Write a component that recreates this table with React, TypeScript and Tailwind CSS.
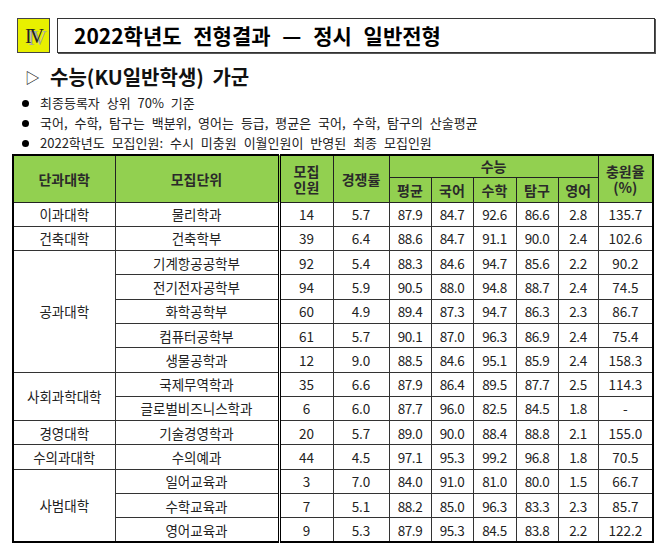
const rows = [
  { college: "이과대학", span: 1, unit: "물리학과", n: "14", r: "5.7", s: ["87.9", "84.7", "92.6", "86.6", "2.8"], fill: "135.7" },
  { college: "건축대학", span: 1, unit: "건축학부", n: "39", r: "6.4", s: ["88.6", "84.7", "91.1", "90.0", "2.4"], fill: "102.6" },
  { college: "공과대학", span: 5, unit: "기계항공공학부", n: "92", r: "5.4", s: ["88.3", "84.6", "94.7", "85.6", "2.2"], fill: "90.2" },
  { college: "", span: 0, unit: "전기전자공학부", n: "94", r: "5.9", s: ["90.5", "88.0", "94.8", "88.7", "2.4"], fill: "74.5" },
  { college: "", span: 0, unit: "화학공학부", n: "60", r: "4.9", s: ["89.4", "87.3", "94.7", "86.3", "2.3"], fill: "86.7" },
  { college: "", span: 0, unit: "컴퓨터공학부", n: "61", r: "5.7", s: ["90.1", "87.0", "96.3", "86.9", "2.4"], fill: "75.4" },
  { college: "", span: 0, unit: "생물공학과", n: "12", r: "9.0", s: ["88.5", "84.6", "95.1", "85.9", "2.4"], fill: "158.3" },
  { college: "사회과학대학", span: 2, unit: "국제무역학과", n: "35", r: "6.6", s: ["87.9", "86.4", "89.5", "87.7", "2.5"], fill: "114.3" },
  { college: "", span: 0, unit: "글로벌비즈니스학과", n: "6", r: "6.0", s: ["87.7", "96.0", "82.5", "84.5", "1.8"], fill: "-" },
  { college: "경영대학", span: 1, unit: "기술경영학과", n: "20", r: "5.7", s: ["89.0", "90.0", "88.4", "88.8", "2.1"], fill: "155.0" },
  { college: "수의과대학", span: 1, unit: "수의예과", n: "44", r: "4.5", s: ["97.1", "95.3", "99.2", "96.8", "1.8"], fill: "70.5" },
  { college: "사범대학", span: 3, unit: "일어교육과", n: "3", r: "7.0", s: ["84.0", "91.0", "81.0", "80.0", "1.5"], fill: "66.7" },
  { college: "", span: 0, unit: "수학교육과", n: "7", r: "5.1", s: ["88.2", "85.0", "96.3", "83.3", "2.3"], fill: "85.7" },
  { college: "", span: 0, unit: "영어교육과", n: "9", r: "5.3", s: ["87.9", "95.3", "84.5", "83.8", "2.2"], fill: "122.2" },
];

const notes = [
  "최종등록자 상위 70% 기준",
  "국어, 수학, 탐구는 백분위, 영어는 등급, 평균은 국어, 수학, 탐구의 산술평균",
  "2022학년도 모집인원: 수시 미충원 이월인원이 반영된 최종 모집인원",
];

const th = "border border-[#222] bg-[#92d050] font-bold text-[14px] text-[#2a2a2a] text-center p-0 leading-[16px]";
const td = "border border-[#333] text-center p-0 text-[#222]";

export default function App() {
  return (
    <div className="w-[664px] h-[549px] bg-white pt-[18px] pl-[17px] pr-[9px] font-['Noto_Sans_CJK_KR',sans-serif]">
      <div className="flex gap-[7px] h-[35px]">
        <div className="w-[33px] h-[35px] bg-[#e8f000] border border-[#444] flex items-center justify-center font-['Liberation_Serif',serif] text-[20px] text-[#222] [text-shadow:3px_2px_0_#a8a8a8] tracking-[-2px]">
          IV
        </div>
        <div className="flex-1 border border-[#333] shadow-[1px_1px_0_#555] flex items-center pl-[16px] text-[21px] font-bold text-black [word-spacing:7px]">
          2022학년도 전형결과 — 정시 일반전형
        </div>
      </div>

      <div className="mt-[11px] ml-[8px] flex items-center gap-[10px] text-[20px] font-bold text-[#111] h-[26px]">
        <span className="text-[15px] font-normal">▷</span>
        <span className="[word-spacing:4px]">수능(KU일반학생) 가군</span>
      </div>

      <div className="mt-[3px] ml-[5px] flex flex-col">
        {notes.map((t) => (
          <div key={t} className="flex items-center h-[20px] text-[13px] text-[#222] [word-spacing:4px]">
            <span className="w-[7px] h-[7px] rounded-full bg-black mr-[11px]" />
            {t}
          </div>
        ))}
      </div>

      <table className="mt-[1px] -ml-[5px] w-[640px] table-fixed border-collapse border-2 border-black text-[13.5px]">
        <colgroup>
          <col className="w-[102px]" />
          <col className="w-[164px]" />
          <col className="w-[54px]" />
          <col className="w-[56px]" />
          <col className="w-[42px]" />
          <col className="w-[42px]" />
          <col className="w-[43px]" />
          <col className="w-[42px]" />
          <col className="w-[40px]" />
          <col className="w-[55px]" />
        </colgroup>
        <thead>
          <tr className="h-[22px]">
            <th rowSpan={2} className={th}>단과대학</th>
            <th rowSpan={2} className={`${th} border-r-[3px] border-r-black border-double`}>모집단위</th>
            <th rowSpan={2} className={th}>모집<br />인원</th>
            <th rowSpan={2} className={th}>경쟁률</th>
            <th colSpan={5} className={th}>수능</th>
            <th rowSpan={2} className={th}>충원율<br />(%)</th>
          </tr>
          <tr className="h-[25px]">
            {["평균", "국어", "수학", "탐구", "영어"].map((h) => (
              <th key={h} className={th}>{h}</th>
            ))}
          </tr>
        </thead>
        <tbody>
          {rows.map((r) => (
            <tr key={r.unit} className="h-[24.3px]">
              {r.span > 0 && (
                <td rowSpan={r.span} className={td}>{r.college}</td>
              )}
              <td className={`${td} border-r-[3px] border-r-black border-double`}>{r.unit}</td>
              <td className={td}>{r.n}</td>
              <td className={td}>{r.r}</td>
              {r.s.map((v, i) => (
                <td key={i} className={`${td} tracking-[-0.4px]`}>{v}</td>
              ))}
              <td className={td}>{r.fill}</td>
            </tr>
          ))}
        </tbody>
      </table>
    </div>
  );
}
